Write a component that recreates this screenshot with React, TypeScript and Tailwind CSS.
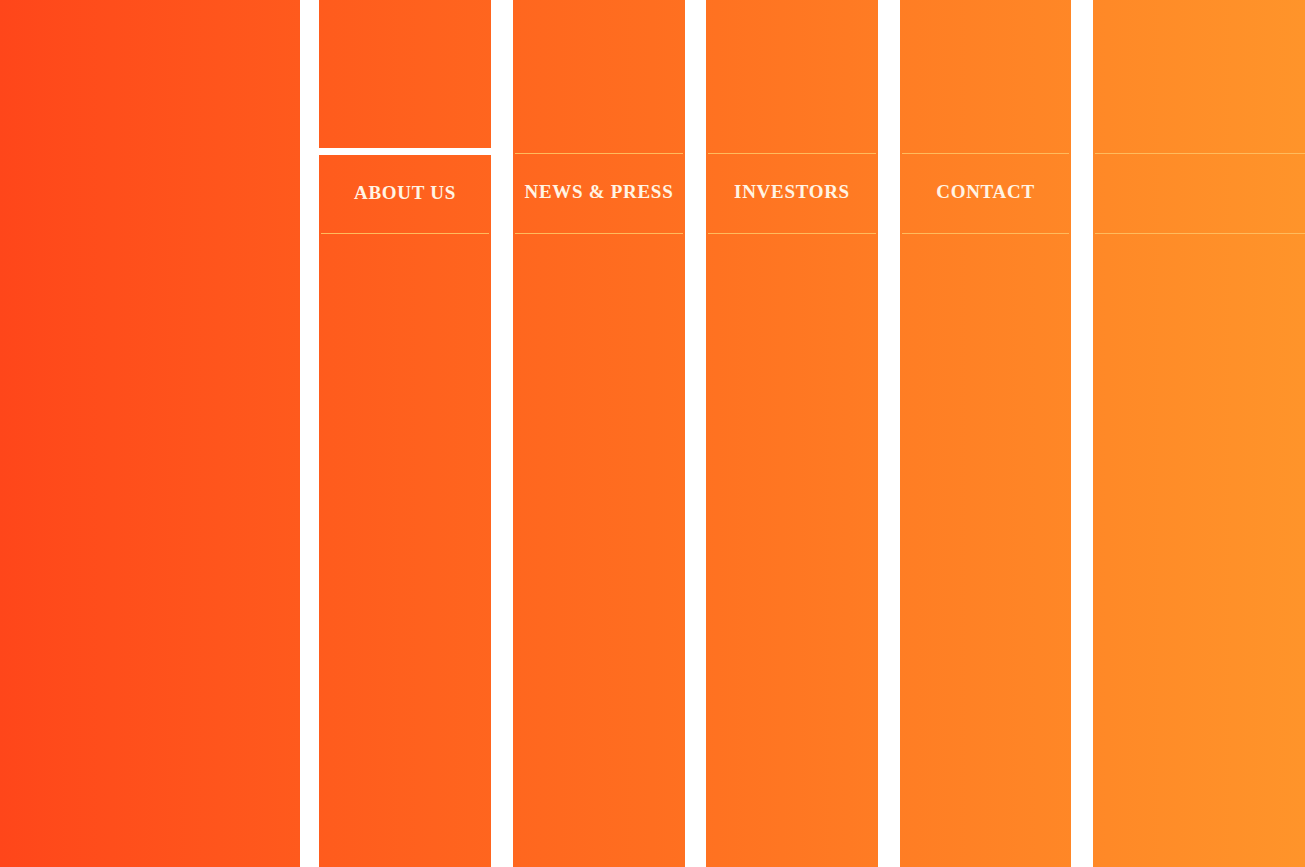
import React from "react";

const Gap = ({ w }: { w: string }) => <div className={`${w} h-full bg-white shrink-0`} />;

const font = { fontFamily: '"Liberation Serif", "DejaVu Serif", serif' };

const Label = ({ text }: { text: string }) => (
  <div
    className="h-[79px] flex items-center justify-center pb-[2px] text-[19px] font-bold tracking-[0.7px] text-[#fff4e4]"
    style={font}
  >
    {text}
  </div>
);

const Line = () => <div className="h-px mx-[2px] bg-[#ffbb5c]" />;

const NavCol = ({ text, w }: { text: string; w: string }) => (
  <div className={`${w} h-full shrink-0 flex flex-col`}>
    <div className="h-[153px]" />
    <Line />
    <Label text={text} />
    <Line />
  </div>
);

export default function App() {
  return (
    <div className="w-full h-[867px] overflow-hidden flex bg-gradient-to-r from-[#ff461a] via-[#ff6e20] to-[#ff942a]">
      <div className="w-[300px] h-full shrink-0" />
      <Gap w="w-[19px]" />
      <div className="w-[172px] h-full shrink-0 flex flex-col">
        <div className="h-[148px]" />
        <div className="h-[7px] bg-white" />
        <div
          className="h-[78px] flex items-center justify-center pb-[1px] text-[19px] font-bold tracking-[0.7px] text-[#fff4e4]"
          style={font}
        >
          ABOUT US
        </div>
        <Line />
      </div>
      <Gap w="w-[22px]" />
      <NavCol text="NEWS & PRESS" w="w-[172px]" />
      <Gap w="w-[21px]" />
      <NavCol text="INVESTORS" w="w-[172px]" />
      <Gap w="w-[22px]" />
      <NavCol text="CONTACT" w="w-[171px]" />
      <Gap w="w-[22px]" />
      <div className="flex-1 h-full flex flex-col">
        <div className="h-[153px]" />
        <div className="h-px ml-[2px] bg-[#ffbb5c]" />
        <div className="h-[79px]" />
        <div className="h-px ml-[2px] bg-[#ffbb5c]" />
      </div>
    </div>
  );
}
